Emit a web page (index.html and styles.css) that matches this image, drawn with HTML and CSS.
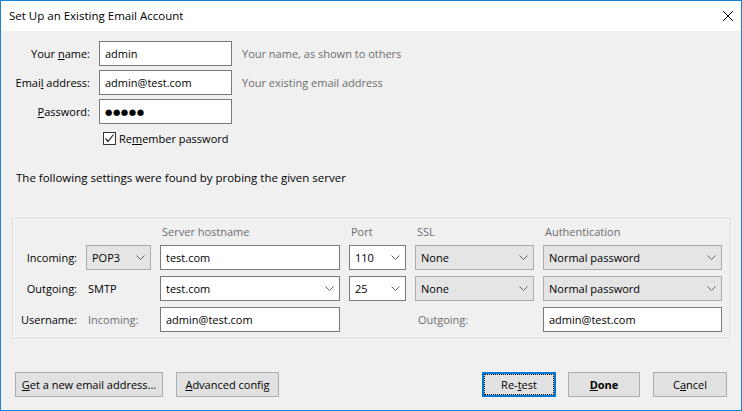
FILE: index.html
```html
<!DOCTYPE html>
<html>
<head>
<meta charset="UTF-8">
<title>Set Up an Existing Email Account</title>
<link rel="stylesheet" href="styles.css">
</head>
<body>
<div class="window">
  <div class="titlebar">
    <span class="title">Set Up an Existing Email Account</span>
    <svg class="close" width="12" height="12" viewBox="0 0 12 12"><path d="M1 1L11 11M11 1L1 11" stroke="#000" stroke-width="1" fill="none"/></svg>
  </div>

  <div class="content">
    <form class="identity">
      <label class="lbl">Your <u>n</u>ame:</label>
      <input class="field" type="text" value="admin">
      <span class="hint">Your name, as shown to others</span>

      <label class="lbl">Emai<u>l</u> address:</label>
      <input class="field" type="text" value="admin@test.com">
      <span class="hint">Your existing email address</span>

      <label class="lbl"><u>P</u>assword:</label>
      <input class="field pass" type="text" value="●●●●●" readonly>
      <span></span>

      <div class="remember">
        <span class="check"><svg width="11" height="11" viewBox="0 0 11 11"><path d="M1.5 5.5L4 8.5L9.5 1.5" stroke="#222" stroke-width="1.2" fill="none"/></svg></span>
        Re<u>m</u>ember password
      </div>
    </form>

    <p class="probe">The following settings were found by probing the given server</p>

    <div class="servers">
      <span></span>
      <span></span>
      <span class="colhead">Server hostname</span>
      <span class="colhead">Port</span>
      <span class="colhead">SSL</span>
      <span class="colhead">Authentication</span>

      <span class="lbl">Incoming:</span>
      <div class="combo gray"><span>POP3</span><svg class="chev" width="9" height="5" viewBox="0 0 9 5"><path d="M0.5 0.5L4.5 4.5L8.5 0.5" stroke="#606060" fill="none"/></svg></div>
      <input class="field" type="text" value="test.com">
      <div class="combo"><span>110</span><svg class="chev" width="9" height="5" viewBox="0 0 9 5"><path d="M0.5 0.5L4.5 4.5L8.5 0.5" stroke="#606060" fill="none"/></svg></div>
      <div class="combo gray"><span>None</span><svg class="chev" width="9" height="5" viewBox="0 0 9 5"><path d="M0.5 0.5L4.5 4.5L8.5 0.5" stroke="#606060" fill="none"/></svg></div>
      <div class="combo gray"><span>Normal password</span><svg class="chev" width="9" height="5" viewBox="0 0 9 5"><path d="M0.5 0.5L4.5 4.5L8.5 0.5" stroke="#606060" fill="none"/></svg></div>

      <span class="lbl">Outgoing:</span>
      <span class="fixed">SMTP</span>
      <div class="combo"><span>test.com</span><svg class="chev" width="9" height="5" viewBox="0 0 9 5"><path d="M0.5 0.5L4.5 4.5L8.5 0.5" stroke="#606060" fill="none"/></svg></div>
      <div class="combo"><span>25</span><svg class="chev" width="9" height="5" viewBox="0 0 9 5"><path d="M0.5 0.5L4.5 4.5L8.5 0.5" stroke="#606060" fill="none"/></svg></div>
      <div class="combo gray"><span>None</span><svg class="chev" width="9" height="5" viewBox="0 0 9 5"><path d="M0.5 0.5L4.5 4.5L8.5 0.5" stroke="#606060" fill="none"/></svg></div>
      <div class="combo gray"><span>Normal password</span><svg class="chev" width="9" height="5" viewBox="0 0 9 5"><path d="M0.5 0.5L4.5 4.5L8.5 0.5" stroke="#606060" fill="none"/></svg></div>

      <span class="lbl">Username:</span>
      <span class="sub">Incoming:</span>
      <input class="field" type="text" value="admin@test.com">
      <span></span>
      <span class="sub out">Outgoing:</span>
      <input class="field" type="text" value="admin@test.com">
    </div>

    <div class="buttons">
      <div class="left">
        <button class="btn wide"><u>G</u>et a new email address...</button>
        <button class="btn adv"><u>A</u>dvanced config</button>
      </div>
      <div class="right">
        <button class="btn retest">Re-<u>t</u>est</button>
        <button class="btn done"><b><u>D</u>one</b></button>
        <button class="btn cancel">C<u>a</u>ncel</button>
      </div>
    </div>
  </div>
</div>
</body>
</html>
```

FILE: styles.css
```css
body {
    margin: 0;
    padding: 0;
    font-family: "Open Sans", "Noto Sans", sans-serif;
    font-size: 11px;
    color: #000;
}

.window {
    width: 742px;
    height: 411px;
    box-sizing: border-box;
    border: 1px solid #1883d7;
    background: #f0f0f0;
    display: flex;
    flex-direction: column;
}

.titlebar {
    height: 30px;
    background: #fff;
    display: flex;
    align-items: center;
    justify-content: space-between;
    padding: 0 7px 0 8px;
}

.title {
    font-size: 11.5px;
    padding-bottom: 1px;
}

.close {
    margin-top: -1px;
}

.content {
    padding-top: 10px;
}

/* top part: name / address / password */
.identity {
    display: grid;
    grid-template-columns: 89px 133px auto;
    grid-auto-rows: 25px;
    column-gap: 9px;
    row-gap: 4px;
    margin: 0;
    align-items: center;
}

.lbl {
    text-align: right;
    white-space: nowrap;
}

.field {
    box-sizing: border-box;
    height: 25px;
    width: 100%;
    border: 1px solid #7a7a7a;
    background: #fff;
    padding: 0 5px;
    font-family: inherit;
    font-size: 11px;
    color: #000;
    outline: none;
    margin: 0;
}

.field.pass {
    font-family: "DejaVu Sans", sans-serif;
    font-size: 8.5px;
    letter-spacing: 0.5px;
    padding-left: 5px;
}

.hint {
    color: #6d6d6d;
    margin-left: 1px;
    white-space: nowrap;
}

.remember {
    grid-column: 2 / 4;
    height: 20px;
    display: flex;
    align-items: center;
    padding-left: 4px;
    align-self: start;
}

.check {
    box-sizing: border-box;
    width: 13px;
    height: 13px;
    border: 1px solid #333;
    background: #fff;
    display: flex;
    align-items: center;
    justify-content: center;
    margin-right: 3px;
}

.probe {
    margin: 17px 0 0 15px;
    line-height: 16px;
    font-size: 11.5px;
}

/* server settings box */
.servers {
    margin: 32px 10px 0 11px;
    border: 1px solid #dcdcdc;
    box-shadow: inset 1px 1px 0 #fff, 1px 1px 0 #fff;
    padding: 5px 8px 6px 0;
    display: grid;
    grid-template-columns: 64px 65px 180px 57px 119px 179px;
    grid-template-rows: 15px 25px 25px 25px;
    column-gap: 9px;
    row-gap: 6px;
    align-items: center;
}

.colhead {
    color: #6d6d6d;
    padding-left: 2px;
}

.fixed {
    padding-left: 2px;
}

.sub {
    color: #6d6d6d;
    padding-left: 2px;
    white-space: nowrap;
}

.sub.out {
    padding-left: 3px;
}

.combo {
    box-sizing: border-box;
    height: 25px;
    border: 1px solid #7a7a7a;
    background: #fff;
    display: flex;
    align-items: center;
    justify-content: space-between;
    padding: 0 5px 0 5px;
}

.combo.gray {
    background: #e5e5e5;
    border-color: #acacac;
}

.chev {
    flex: none;
}

/* bottom buttons */
.buttons {
    display: flex;
    justify-content: space-between;
    margin-top: 33px;
    padding: 0 14px 0 14px;
}

.left, .right {
    display: flex;
}

.btn {
    box-sizing: border-box;
    height: 25px;
    border: 1px solid #adadad;
    background: #e1e1e1;
    font-family: inherit;
    font-size: 11px;
    color: #000;
    padding: 0;
    margin: 0;
}

.btn b {
    font-weight: 700;
}

.wide { width: 148px; }
.adv { width: 103px; margin-left: 13px; }
.retest {
    width: 74px;
    border-color: #0078d7;
    box-shadow: inset 0 0 0 1px #0078d7;
    outline: 1px dotted #000;
    outline-offset: -3px;
}
.done { width: 72px; margin-left: 12px; }
.cancel { width: 74px; margin-left: 13px; }
```
